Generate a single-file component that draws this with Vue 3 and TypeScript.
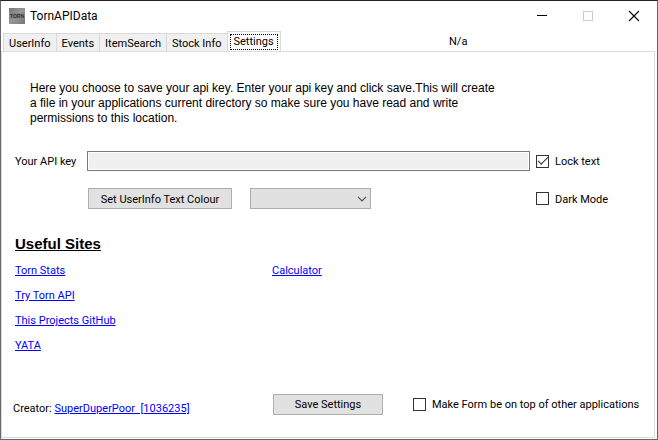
<script setup lang="ts">
import { ref } from 'vue'

interface Site {
  label: string
  href: string
}

const tabs: string[] = ['UserInfo', 'Events', 'ItemSearch', 'Stock Info', 'Settings']
const activeTab = ref<string>('Settings')
const apiKey = ref<string>('')
const lockText = ref<boolean>(true)
const darkMode = ref<boolean>(false)
const onTop = ref<boolean>(false)
const colour = ref<string>('')

const mainSites: Site[] = [
  { label: 'Torn Stats', href: '#torn-stats' },
  { label: 'Try Torn API', href: '#try-torn-api' },
  { label: 'This Projects GitHub', href: '#github' },
  { label: 'YATA', href: '#yata' },
]
const toolSites: Site[] = [{ label: 'Calculator', href: '#calculator' }]
</script>

<template>
  <div class="window">
    <header class="titlebar">
      <svg class="logo" viewBox="0 0 16 16" aria-hidden="true">
        <defs>
          <linearGradient id="plate" x1="0" y1="0" x2="1" y2="1">
            <stop offset="0" stop-color="#777" />
            <stop offset="0.5" stop-color="#969696" />
            <stop offset="1" stop-color="#757575" />
          </linearGradient>
        </defs>
        <rect width="16" height="16" fill="url(#plate)" />
        <rect x="1" y="5" width="14" height="6" fill="#858585" />
        <text x="8" y="10" text-anchor="middle" class="logo-text">TORN</text>
      </svg>
      <h1 class="title">TornAPIData</h1>
      <div class="controls">
        <button type="button" class="control" aria-label="Minimize">
          <svg viewBox="0 0 10 10" shape-rendering="crispEdges"><path d="M0 4.5H10" stroke="#000" /></svg>
        </button>
        <button type="button" class="control" aria-label="Maximize" disabled>
          <svg viewBox="0 0 10 10"><rect x="0.5" y="0.5" width="9" height="9" fill="none" stroke="#ccc" /></svg>
        </button>
        <button type="button" class="control" aria-label="Close">
          <svg viewBox="0 0 10 10"><path d="M0 0L10 10M10 0L0 10" stroke="#000" stroke-width="1.1" /></svg>
        </button>
      </div>
    </header>

    <nav class="tabstrip">
      <div class="tabs" role="tablist">
        <button
          v-for="tab in tabs"
          :key="tab"
          type="button"
          role="tab"
          class="tab"
          :class="{ active: tab === activeTab }"
          :aria-selected="tab === activeTab"
          @click="activeTab = tab"
        >
          <span class="tab-label">{{ tab }}</span>
        </button>
      </div>
      <span class="status">N/a</span>
    </nav>

    <main class="panel">
      <p class="intro">
        Here you choose to save your api key. Enter your api key and click save.This will create<br />
        a file in your applications current directory so make sure you have read and write<br />
        permissions to this location.
      </p>

      <div class="form">
        <label for="api-key" class="caption">Your API key</label>
        <input id="api-key" v-model="apiKey" class="key" type="text" :readonly="lockText" />
        <label class="check"><input v-model="lockText" type="checkbox" /><span class="caption">Lock text</span></label>
        <div class="colour-row">
          <button type="button" class="button">Set UserInfo Text Colour</button>
          <div class="combo">
            <select v-model="colour" aria-label="Text colour">
              <option value=""></option>
              <option value="black">Black</option>
              <option value="blue">Blue</option>
            </select>
            <svg class="chevron" viewBox="0 0 10 6" aria-hidden="true">
              <path d="M1 0.8L5 4.8L9 0.8" fill="none" stroke="#505050" stroke-width="1.2" />
            </svg>
          </div>
        </div>
        <label class="check"><input v-model="darkMode" type="checkbox" /><span class="caption">Dark Mode</span></label>
      </div>

      <section class="sites">
        <h2>Useful Sites</h2>
        <div class="site-columns">
          <ul>
            <li v-for="site in mainSites" :key="site.label"><a :href="site.href">{{ site.label }}</a></li>
          </ul>
          <ul>
            <li v-for="site in toolSites" :key="site.label"><a :href="site.href">{{ site.label }}</a></li>
          </ul>
        </div>
      </section>

      <footer class="footer">
        <p class="creator">Creator: <a href="#creator">SuperDuperPoor&nbsp; [1036235]</a></p>
        <button type="button" class="button">Save Settings</button>
        <label class="check"><input v-model="onTop" type="checkbox" /><span class="caption">Make Form be on top of other applications</span></label>
      </footer>
    </main>
  </div>
</template>

<style>
body {
  margin: 0;
  background: #fff;
}
</style>

<style scoped>
.window {
  box-sizing: border-box;
  min-height: 100vh;
  display: flex;
  flex-direction: column;
  border: 1px solid #66666a;
  border-top-color: #242226;
  background: #fff;
  color: #000;
  font: 11px/14px Roboto, "Liberation Sans", Arial, sans-serif;
}
button,
input,
select {
  font: inherit;
  color: inherit;
  margin: 0;
}
.titlebar {
  display: flex;
  align-items: center;
  height: 29px;
  padding-left: 8px;
}
.logo {
  width: 16px;
  height: 16px;
}
.logo-text {
  font: bold 5px "Liberation Sans", sans-serif;
  fill: #333;
}
.title {
  flex: 1;
  margin: 0 0 0 5px;
  font: 12px/16px Roboto, "Noto Sans", sans-serif;
}
.controls {
  display: flex;
}
.control {
  width: 46px;
  height: 28px;
  padding: 0;
  border: 0;
  background: none;
  display: grid;
  place-items: center;
}
.control svg {
  width: 10px;
  height: 10px;
  overflow: visible;
}
.tabstrip {
  display: flex;
  align-items: flex-end;
  height: 21px;
  padding-left: 2px;
}
.tabs {
  display: flex;
  align-items: flex-end;
  width: 446px;
}
.tab {
  height: 18px;
  padding: 2px 5px 0;
  border: 1px solid #d9d9d9;
  border-width: 1px 1px 0 0;
  background: #f0f0f0;
}
.tab:first-child {
  border-left-width: 1px;
}
.tab.active {
  height: 21px;
  margin: 0 0 -1px -1px;
  padding: 0 2px;
  border-left-width: 1px;
  background: #fff;
}
.tab-label {
  display: block;
}
.active .tab-label {
  padding: 0 3px;
  border: 1px dotted #000;
}
.status {
  padding-bottom: 2px;
}
.panel {
  flex: 1;
  display: flex;
  flex-direction: column;
  margin: 0 2px 1px 0;
  padding: 29px 6px 21px 13px;
  border: 1px solid #dcdcdc;
}
.intro {
  margin: 0 0 25px 15px;
  font: 12px/15px "Liberation Sans", Arial, sans-serif;
}
.form {
  display: grid;
  grid-template-columns: 72px 1fr 118px;
  row-gap: 17px;
  align-items: center;
}
.key {
  box-sizing: border-box;
  width: 100%;
  height: 20px;
  padding: 0 3px;
  border: 1px solid #7a7a7a;
  outline: 0;
  background: #f0f0f0;
  box-shadow: inset 0 0 0 1px #fff;
}
.check {
  display: flex;
  align-items: center;
  gap: 6px;
  margin-left: 6px;
}
.caption {
  padding-top: 2px;
}
.check input {
  appearance: none;
  box-sizing: border-box;
  width: 13px;
  height: 13px;
  border: 1px solid #333;
  background: #fff;
  display: grid;
  place-items: center;
}
.check input:checked::before {
  content: "";
  width: 10px;
  height: 5px;
  margin-bottom: 3px;
  border: solid #333;
  border-width: 0 0 1px 1px;
  box-sizing: border-box;
  transform: rotate(-45deg);
}
.colour-row {
  grid-column: 1 / 3;
  display: flex;
  gap: 18px;
  padding-left: 73px;
}
.colour-row .button {
  width: 144px;
}
.button {
  box-sizing: border-box;
  height: 21px;
  padding: 2px 0 0;
  border: 1px solid #adadad;
  background: #e1e1e1;
}
.combo {
  display: grid;
  align-items: center;
  width: 121px;
}
.combo select {
  grid-area: 1 / 1;
  appearance: none;
  box-sizing: border-box;
  width: 100%;
  height: 21px;
  padding: 0 20px 0 4px;
  border: 1px solid #adadad;
  border-radius: 0;
  background: #e1e1e1;
}
.chevron {
  grid-area: 1 / 1;
  justify-self: end;
  width: 10px;
  height: 6px;
  margin-right: 4px;
  pointer-events: none;
}
.sites h2 {
  margin: 26px 0 11px;
  font: bold 15px/18px "Liberation Sans", Arial, sans-serif;
  text-decoration: underline;
}
.site-columns {
  display: grid;
  grid-template-columns: 257px 1fr;
}
ul {
  list-style: none;
  margin: 0;
  padding: 0;
}
li {
  height: 25px;
}
a {
  color: #00f;
}
.footer {
  display: flex;
  align-items: center;
  margin-top: auto;
}
.creator {
  width: 260px;
  margin: 10px 0 0 -2px;
}
.footer .button {
  width: 110px;
}
.footer .check {
  margin-left: 30px;
}
</style>
